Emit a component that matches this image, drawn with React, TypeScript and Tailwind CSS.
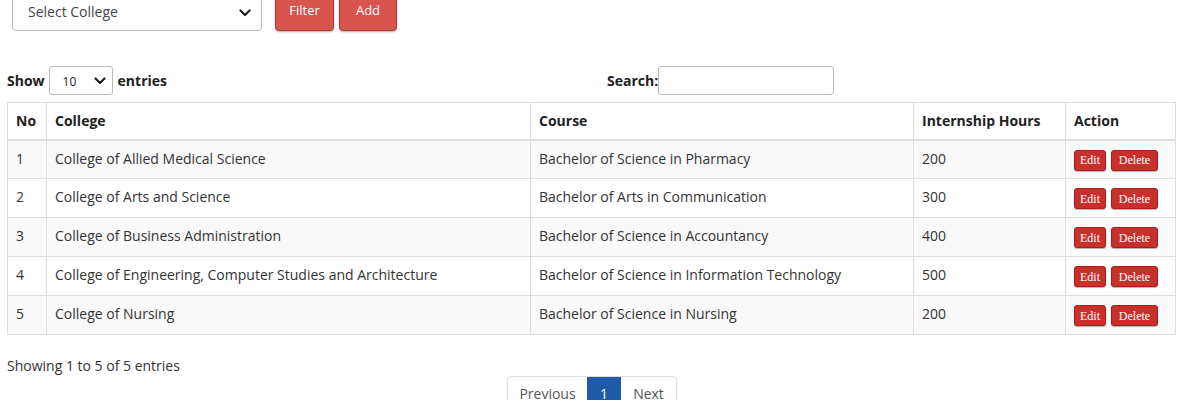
import React from 'react';

const rows = [
  { no: 1, college: 'College of Allied Medical Science', course: 'Bachelor of Science in Pharmacy', hours: 200 },
  { no: 2, college: 'College of Arts and Science', course: 'Bachelor of Arts in Communication', hours: 300 },
  { no: 3, college: 'College of Business Administration', course: 'Bachelor of Science in Accountancy', hours: 400 },
  { no: 4, college: 'College of Engineering, Computer Studies and Architecture', course: 'Bachelor of Science in Information Technology', hours: 500 },
  { no: 5, college: 'College of Nursing', course: 'Bachelor of Science in Nursing', hours: 200 },
];

const Chevron = () => (
  <svg width="12" height="8" viewBox="0 0 12 8" fill="none">
    <path d="M1.5 1.5 L6 6 L10.5 1.5" stroke="#222" strokeWidth="2.2" strokeLinecap="round" strokeLinejoin="round" />
  </svg>
);

const App = () => {
  return (
    <div className="w-[1188px] h-[400px] overflow-hidden bg-white text-[14px] text-[#333]" style={{ fontFamily: '"Open Sans", "Liberation Sans", sans-serif' }}>
      {/* college filter */}
      <div className="flex items-end gap-[5px] -mt-[8px] pl-[12px]">
        <div className="w-[250px] h-[39px] border border-[#bbb] rounded-[4px] flex items-center justify-between pl-[15px] pr-[10px] shadow-[inset_0_1px_1px_rgba(0,0,0,0.08)]">
          <span className="text-[14px] text-[#444] -mt-[1px]">Select College</span>
          <span className="pt-[2px]"><Chevron /></span>
        </div>
        <button className="ml-[8px] w-[59px] h-[39px] bg-[#d9534f] border border-[#b33a36] rounded-[4px] text-white text-[13px] pb-[2px] shadow-[0_1px_2px_rgba(0,0,0,0.3)]">Filter</button>
        <button className="w-[58px] h-[39px] bg-[#d9534f] border border-[#b33a36] rounded-[4px] text-white text-[13px] pb-[2px] shadow-[0_1px_2px_rgba(0,0,0,0.3)]">Add</button>
      </div>

      {/* controls */}
      <div className="flex items-center mt-[35px] px-[7px] h-[29px]">
        <span className="font-bold text-[14px] text-[#222]">Show</span>
        <div className="ml-[4px] w-[64px] h-[29px] border border-[#bbb] rounded-[3px] flex items-center justify-between pl-[13px] pr-[6px]">
          <span className="text-[12px] text-[#222] pt-[2px]">10</span>
          <Chevron />
        </div>
        <span className="ml-[5px] font-bold text-[14px] text-[#222]">entries</span>
        <span className="ml-[440px] font-bold text-[14px] text-[#222]">Search:</span>
        <div className="w-[176px] h-[29px] border border-[#bbb] rounded-[3px]" />
      </div>

      {/* table */}
      <div className="mx-[7px] mt-[7px]">
        <table className="w-[1168px] border-collapse border border-[#ddd] table-fixed">
          <colgroup>
            <col className="w-[39px]" />
            <col className="w-[484px]" />
            <col className="w-[383px]" />
            <col className="w-[152px]" />
            <col className="w-[110px]" />
          </colgroup>
          <thead>
            <tr className="h-[37px] border-b-2 border-[#ddd]">
              <th className="border-r border-[#ddd] text-left px-[8px] font-bold text-[#222]">No</th>
              <th className="border-r border-[#ddd] text-left px-[8px] font-bold text-[#222]">College</th>
              <th className="border-r border-[#ddd] text-left px-[8px] font-bold text-[#222]">Course</th>
              <th className="border-r border-[#ddd] text-left px-[8px] font-bold text-[#222]">Internship Hours</th>
              <th className="text-left px-[8px] font-bold text-[#222]">Action</th>
            </tr>
          </thead>
          <tbody>
            {rows.map((r, i) => (
              <tr key={r.no} className={`h-[39px] border-t border-[#ddd] ${i % 2 === 0 ? 'bg-[#f9f9f9]' : 'bg-white'}`}>
                <td className="border-r border-[#ddd] px-[8px] align-top pt-[7px]">{r.no}</td>
                <td className="border-r border-[#ddd] px-[8px] align-top pt-[7px]">{r.college}</td>
                <td className="border-r border-[#ddd] px-[8px] align-top pt-[7px]">{r.course}</td>
                <td className="border-r border-[#ddd] px-[8px] align-top pt-[7px]">{r.hours}</td>
                <td className="px-[8px] align-top pt-[9px]">
                  <div className="flex gap-[5px]">
                    <button className="h-[21px] w-[32px] bg-[#c9302c] border border-[#a51f1b] rounded-[3px] text-white text-[12px] leading-none shadow-[0_1px_1px_rgba(0,0,0,0.3)]" style={{ fontFamily: '"Liberation Serif", serif' }}>Edit</button>
                    <button className="h-[21px] w-[47px] bg-[#c9302c] border border-[#a51f1b] rounded-[3px] text-white text-[12px] leading-none shadow-[0_1px_1px_rgba(0,0,0,0.3)]" style={{ fontFamily: '"Liberation Serif", serif' }}>Delete</button>
                  </div>
                </td>
              </tr>
            ))}
          </tbody>
        </table>
      </div>

      {/* footer */}
      <div className="px-[7px] mt-[20px] text-[14px] text-[#333]">Showing 1 to 5 of 5 entries</div>
      <div className="flex justify-center pr-[4px]">
        <div className="flex h-[34px] border border-[#ddd] rounded-[4px] overflow-hidden">
          <span className="w-[79px] flex items-center justify-center text-[#555] pt-[1px]">Previous</span>
          <span className="w-[34px] flex items-center justify-center bg-[#1f5ba8] text-white pt-[1px]">1</span>
          <span className="w-[55px] flex items-center justify-center text-[#555] pt-[1px]">Next</span>
        </div>
      </div>
    </div>
  );
};

export default App;
